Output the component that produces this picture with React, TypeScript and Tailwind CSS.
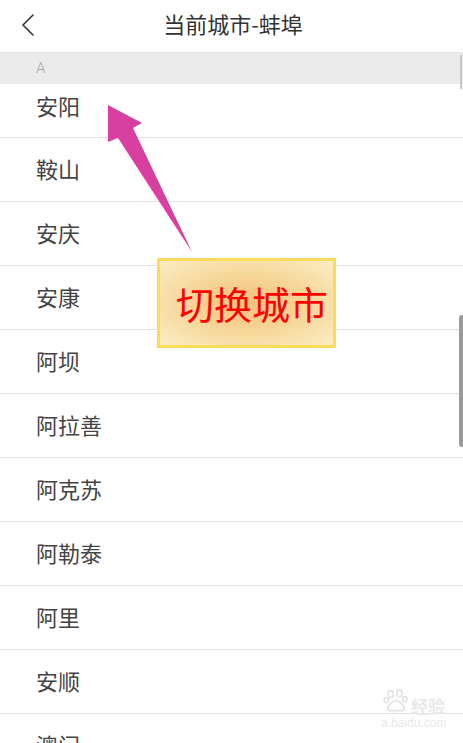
const cities = ["鞍山", "安庆", "安康", "阿坝", "阿拉善", "阿克苏", "阿勒泰", "阿里", "安顺", "澳门"];

const font = "font-['Noto_Sans_CJK_SC','Noto_Sans',sans-serif]";

export default function App() {
  return (
    <div className={`relative w-[463px] h-[743px] overflow-hidden bg-white ${font}`}>
      {/* Header */}
      <div className="relative h-[53px] flex items-center justify-center border-b border-[#e2e2e2]">
        <svg viewBox="0 0 14 22" className="absolute left-[21px] top-[14px] w-[14px] h-[22px]" fill="none" stroke="#333" strokeWidth="1.6" strokeLinecap="round" strokeLinejoin="round">
          <path d="M12 1 L2 11 L12 21" />
        </svg>
        <span className="text-[22px] text-[#333] leading-none -mt-[6px] ml-[3px]">当前城市-蚌埠</span>
      </div>

      {/* Section header */}
      <div className="h-[31px] bg-[#ebebeb] flex items-center pl-[36px] text-[15px] text-[#aaa] font-['Roboto',sans-serif] font-light">
        A
      </div>

      {/* List */}
      <ul className="list-none m-0 p-0">
        <li className="h-[54px] flex items-center pb-[11px] pl-[36px] border-b border-[#e0e0e0] text-[22px] text-[#444]">安阳</li>
        {cities.map((c) => (
          <li key={c} className="h-16 flex items-center pb-[3px] pl-[36px] border-b border-[#e0e0e0] text-[22px] text-[#444]">
            {c}
          </li>
        ))}
      </ul>

      {/* Scroll indicators */}
      <div className="absolute right-[1px] top-[55px] w-[2px] h-[34px] bg-[#c8c8c8]" />
      <div className="absolute right-0 top-[315px] w-[4px] h-[132px] bg-[#9a9a9a] rounded-l-[3px]" />

      {/* Annotation arrow */}
      <svg className="absolute inset-0 w-[463px] h-[743px] pointer-events-none" viewBox="0 0 463 743">
        <polygon points="108,105 142,123 133,128 192,252 118,138 108,142" fill="#d93fa1" />
      </svg>

      {/* Annotation box */}
      <div className="absolute left-[157px] top-[258px] w-[179px] h-[90px] border-[3px] border-[#f8dc5a] bg-[radial-gradient(ellipse_at_center,#f2c07c_0%,#f6d79a_50%,#fbedc4_100%)] flex items-center pl-[16px]">
        <span className="text-[38px] leading-none text-[#ff0000] font-['Noto_Sans_CJK_SC',sans-serif]">切换城市</span>
      </div>

      {/* Watermark */}
      <div className="absolute left-[383px] top-[688px] flex flex-col items-start text-[#e8e8e8] pointer-events-none">
        <div className="flex items-end gap-[2px]">
          <svg viewBox="0 0 30 30" className="w-[26px] h-[26px]" fill="none" stroke="#e4e4e4" strokeWidth="2">
            <ellipse cx="9" cy="7" rx="3" ry="4" />
            <ellipse cx="19" cy="6" rx="3" ry="4" />
            <ellipse cx="4" cy="14" rx="2.5" ry="3" />
            <ellipse cx="25" cy="13" rx="2.5" ry="3" />
            <path d="M8 26 C4 26 5 20 10 17 C13 14 17 14 20 17 C25 20 26 26 22 26 Z" />
          </svg>
          <span className="text-[17px] leading-none font-bold">经验</span>
        </div>
        <span className="text-[12px] leading-none mt-[3px] -ml-[2px] font-['Liberation_Sans',sans-serif]">a.baidu.com</span>
      </div>
    </div>
  );
}
